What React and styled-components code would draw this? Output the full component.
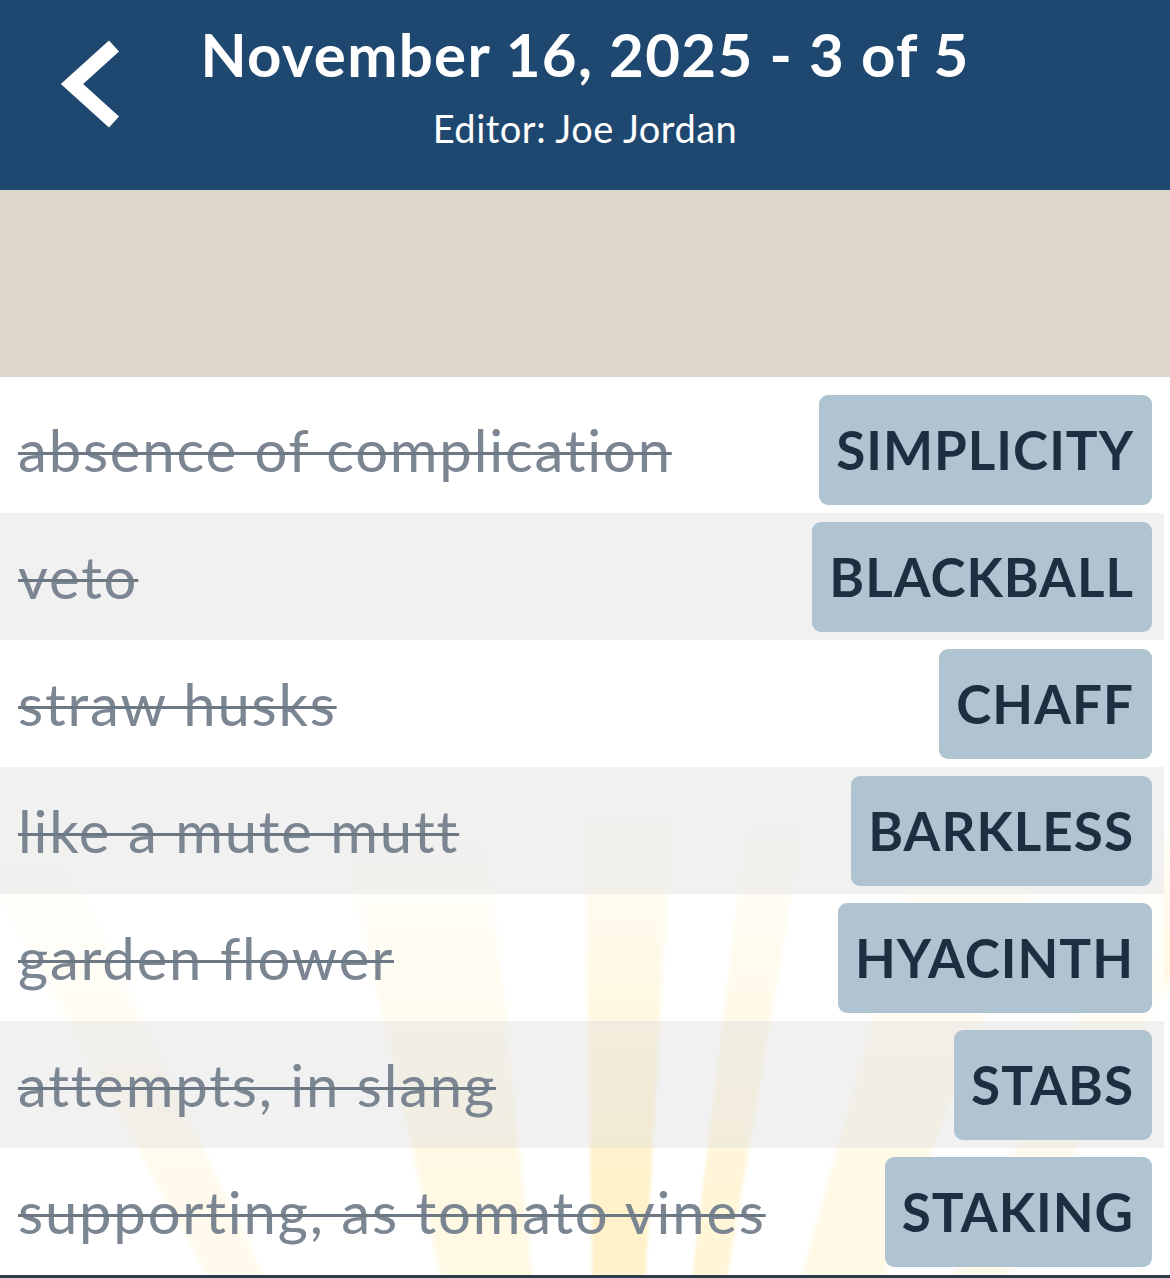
import React from 'react';
import styled, { createGlobalStyle } from 'styled-components';

const GlobalStyle = createGlobalStyle`
  html, body {
    margin: 0;
    padding: 0;
    background: #ffffff;
    font-family: Lato, 'Open Sans', sans-serif;
  }
`;

const clues = [
  { clue: 'absence of complication', answer: 'SIMPLICITY' },
  { clue: 'veto', answer: 'BLACKBALL' },
  { clue: 'straw husks', answer: 'CHAFF' },
  { clue: 'like a mute mutt', answer: 'BARKLESS' },
  { clue: 'garden flower', answer: 'HYACINTH' },
  { clue: 'attempts, in slang', answer: 'STABS' },
  { clue: 'supporting, as tomato vines', answer: 'STAKING' },
];

function BackChevron() {
  return (
    <svg width="70" height="100" viewBox="0 0 70 100">
      <polyline
        points="54,9 12,47 54,85"
        fill="none"
        stroke="#ffffff"
        strokeWidth="15"
        strokeLinejoin="miter"
      />
    </svg>
  );
}

function App() {
  return (
    <Page>
      <GlobalStyle />
      <Header>
        <BackButton aria-label="Back">
          <BackChevron />
        </BackButton>
        <TitleBlock>
          <Title>November 16, 2025 - 3 of 5</Title>
          <Subtitle>Editor: Joe Jordan</Subtitle>
        </TitleBlock>
        <div />
      </Header>
      <Banner />
      <List>
        {clues.map((c, i) => (
          <Row key={c.answer} shaded={i % 2 === 1}>
            <Clue>{c.clue}</Clue>
            <Answer>{c.answer}</Answer>
          </Row>
        ))}
      </List>
      <BottomBar />
    </Page>
  );
}

const Page = styled.div`
  width: 1170px;
  display: flex;
  flex-direction: column;
`;

const Header = styled.header`
  height: 190px;
  background: #1f4870;
  display: grid;
  grid-template-columns: 1fr auto 1fr;
  align-items: start;
`;

const BackButton = styled.button`
  background: none;
  border: none;
  padding: 0;
  margin: 37px 0 0 60px;
  width: 70px;
  height: 100px;
  cursor: pointer;
  svg {
    display: block;
  }
`;

const TitleBlock = styled.div`
  display: flex;
  flex-direction: column;
  align-items: center;
  color: #ffffff;
  padding-top: 18px;
`;

const Title = styled.h1`
  margin: 0;
  font-size: 60px;
  line-height: 72px;
  font-weight: 700;
  letter-spacing: 1.3px;
`;

const Subtitle = styled.p`
  margin: 16px 0 0;
  font-size: 38px;
  line-height: 44px;
  font-weight: 400;
  letter-spacing: 0.5px;
`;

const Banner = styled.div`
  height: 187px;
  background: #ddd6ca;
`;

const ray = (a) => `rgba(255, 210, 80, ${a})`;

const List = styled.div`
  display: flex;
  flex-direction: column;
  padding-top: 9px;
  background:
    linear-gradient(to bottom, #ffffff 0%, #ffffff 45%, rgba(255, 255, 255, 0) 90%),
    conic-gradient(
      from -30deg at 605px 1623px,
      ${ray(0)} 0deg 1deg,
      ${ray(0.35)} 1.5deg 4.5deg,
      ${ray(0)} 5deg 17deg,
      ${ray(0.5)} 17.5deg 24deg,
      ${ray(0)} 24.5deg 28.8deg,
      ${ray(0.95)} 29.2deg 33deg,
      ${ray(0)} 33.4deg 36.7deg,
      ${ray(0.7)} 37deg 39.4deg,
      ${ray(0)} 39.8deg 45deg,
      ${ray(0.45)} 45.5deg 50.8deg,
      ${ray(0)} 51.3deg 55.5deg,
      ${ray(0.35)} 56deg 58.7deg,
      ${ray(0)} 59.2deg 360deg
    );
`;

const Row = styled.div`
  width: 1164px;
  height: 127px;
  box-sizing: border-box;
  display: flex;
  align-items: center;
  justify-content: space-between;
  padding: 0 12px 0 18px;
  background: ${(p) => (p.shaded ? 'rgba(238, 238, 238, 0.8)' : 'rgba(255, 255, 255, 0.68)')};
`;

const Clue = styled.span`
  font-size: 58px;
  font-weight: 400;
  letter-spacing: 1.8px;
  color: #7b8692;
  text-decoration: line-through;
  text-decoration-thickness: 3px;
  text-decoration-color: #6c7884;
  white-space: nowrap;
`;

const Answer = styled.span`
  height: 110px;
  box-sizing: border-box;
  display: flex;
  align-items: center;
  padding: 0 18px 0 17px;
  background: #b0c3d0;
  border-radius: 9px;
  color: #1c2e40;
  font-size: 53px;
  font-weight: 700;
  letter-spacing: 1px;
`;

const BottomBar = styled.div`
  height: 4px;
  background: #2b3d4b;
`;

export default App;
